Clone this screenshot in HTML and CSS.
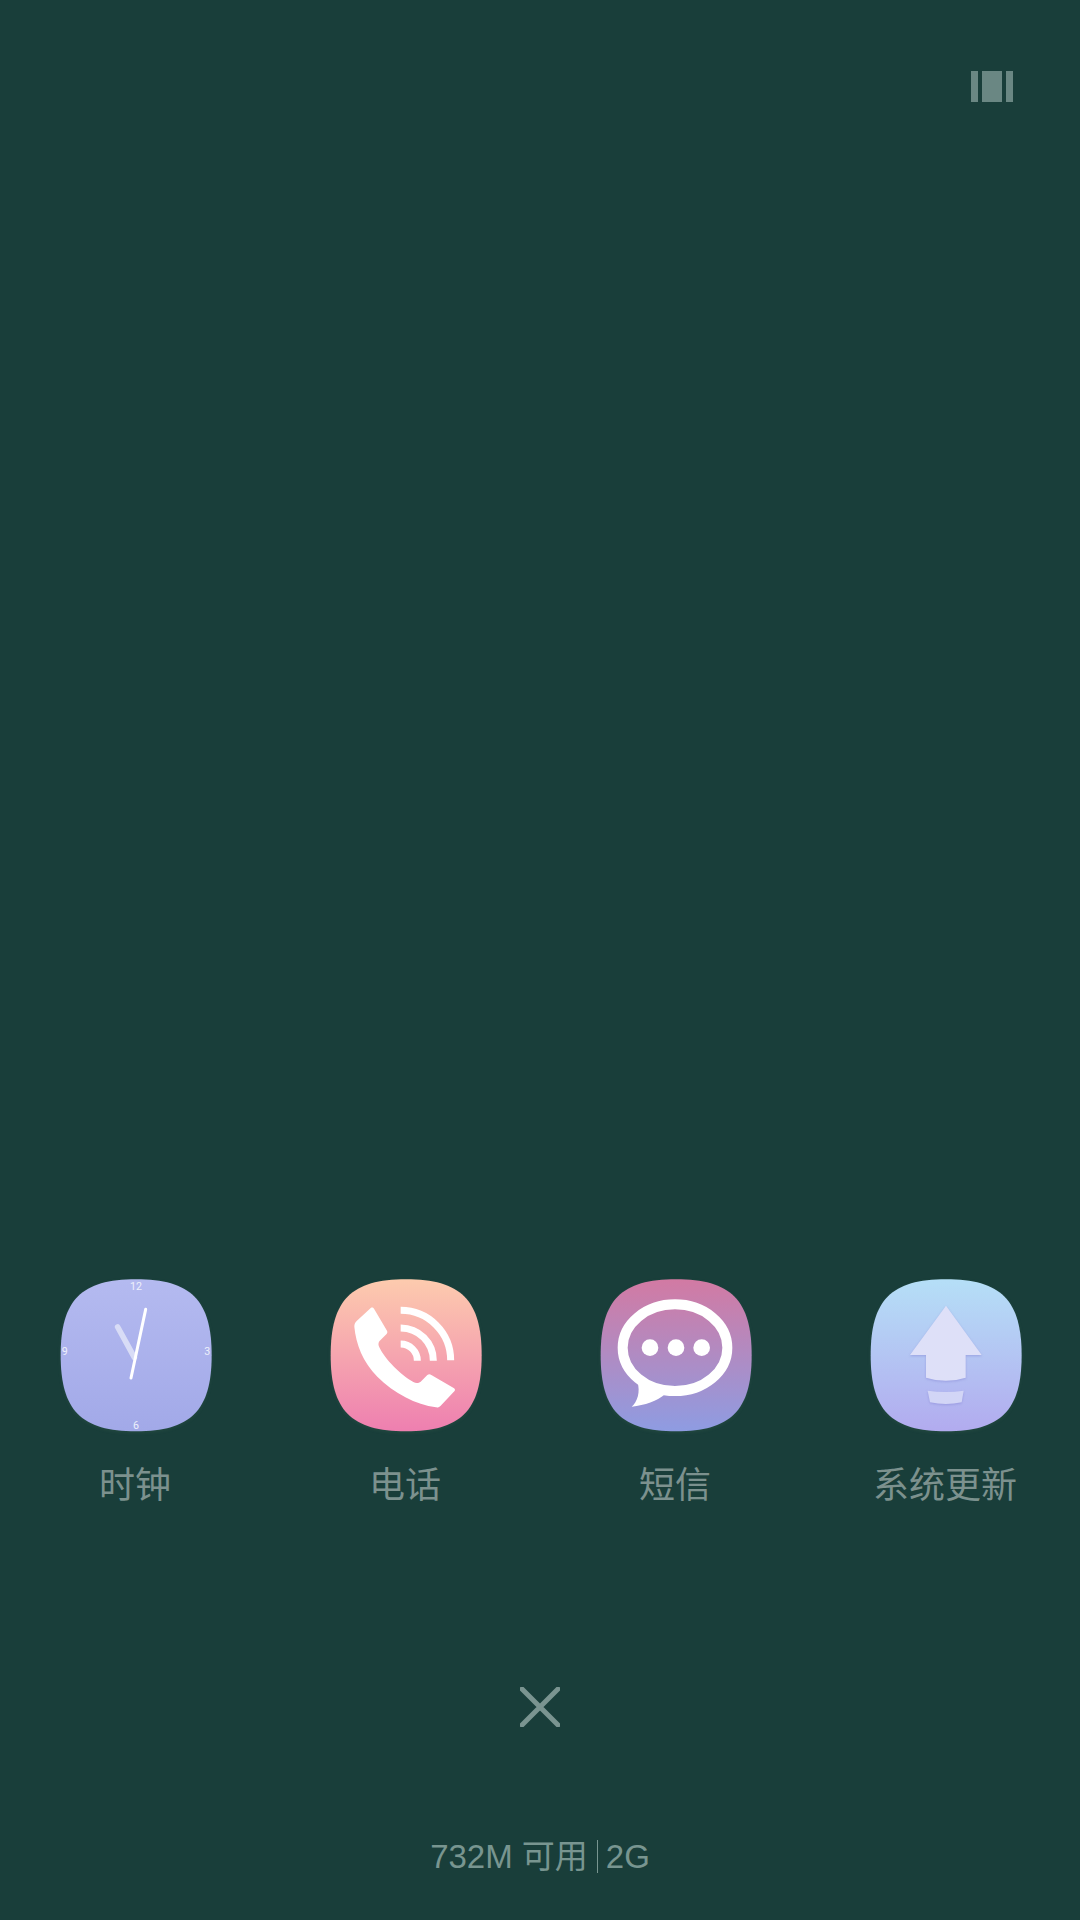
FILE: index.html
```html
<!DOCTYPE html>
<html lang="zh-CN">
<head>
<meta charset="utf-8">
<title>最近任务</title>
<link rel="stylesheet" href="styles.css">
</head>
<body>
<main class="screen">
  <header class="top">
    <div class="grid-toggle"><span class="bar"></span><span class="bar bar-wide"></span><span class="bar"></span></div>
  </header>

  <section class="apps">
    <article class="app">
      <svg class="icon" viewBox="45 48 480 480">
        <defs><linearGradient id="gc" x1="0" y1="0" x2="0" y2="1"><stop offset="0" stop-color="#b4baf0"/><stop offset="1" stop-color="#a2a9e8"/></linearGradient></defs>
        <path class="squircle" fill="url(#gc)" d="M288 58C452 58 515 120 515 286C515 452 452 514 288 514C124 514 62 452 62 286C62 120 124 58 288 58Z"/>
        <text class="num" x="288" y="90">12</text>
        <text class="num" x="502" y="285">3</text>
        <text class="num" x="288" y="507">6</text>
        <text class="num" x="74" y="285">9</text>
        <line class="hand-hour" x1="233" y1="201" x2="283" y2="292"/>
        <line class="hand-min" x1="273" y1="354" x2="317" y2="148"/>
      </svg>
      <div class="label">时钟</div>
    </article>

    <article class="app">
      <svg class="icon" viewBox="45 48 480 480">
        <defs><linearGradient id="gp" x1="0" y1="0" x2="0" y2="1"><stop offset="0" stop-color="#fdcbae"/><stop offset="1" stop-color="#ee7fb0"/></linearGradient></defs>
        <path class="squircle" fill="url(#gp)" d="M288 58C452 58 515 120 515 286C515 452 452 514 288 514C124 514 62 452 62 286C62 120 124 58 288 58Z"/>
        <path class="white" d="M183 143C187 141 190 143 192 146L231 212C233 216 232 220 229 223L208 244C204 250 205 256 208 262C225 298 272 345 310 366C318 371 326 370 332 365L352 345C356 342 360 342 364 345L431 384C436 387 436 391 433 394L392 437C388 441 384 443 378 442C318 434 252 400 202 350C158 305 138 252 133 200C133 193 135 188 140 183Z"/>
        <path class="wave" d="M272 151A150 150 0 0 1 422 301"/>
        <path class="wave" d="M272 204A98 98 0 0 1 370 302"/>
        <path class="wave" d="M272 252A50 50 0 0 1 322 302"/>
      </svg>
      <div class="label">电话</div>
    </article>

    <article class="app">
      <svg class="icon" viewBox="45 48 480 480">
        <defs><linearGradient id="gm" x1="0" y1="0" x2="0" y2="1"><stop offset="0" stop-color="#d27aa3"/><stop offset="1" stop-color="#8e9ce2"/></linearGradient></defs>
        <path class="squircle" fill="url(#gm)" d="M288 58C452 58 515 120 515 286C515 452 452 514 288 514C124 514 62 452 62 286C62 120 124 58 288 58Z"/>
        <path class="white" d="M172 365C182 395 172 425 155 440C195 436 230 425 258 400Z"/>
        <ellipse class="bubble" cx="285" cy="263" rx="157" ry="130"/>
        <circle class="white" cx="210" cy="263" r="25"/>
        <circle class="white" cx="288" cy="263" r="25"/>
        <circle class="white" cx="365" cy="263" r="25"/>
      </svg>
      <div class="label">短信</div>
    </article>

    <article class="app">
      <svg class="icon" viewBox="45 48 480 480">
        <defs><linearGradient id="gu" x1="0" y1="0" x2="0" y2="1"><stop offset="0" stop-color="#b5dff7"/><stop offset="1" stop-color="#b2abef"/></linearGradient></defs>
        <path class="squircle" fill="url(#gu)" d="M288 58C452 58 515 120 515 286C515 452 452 514 288 514C124 514 62 452 62 286C62 120 124 58 288 58Z"/>
        <path class="arrow" d="M288 137L395 285L347 285L347 353Q288 372 228 353L228 285L180 285Z"/>
        <path class="arrow arrow-base" d="M233 392Q288 400 341 392L335 427Q288 437 240 427Z"/>
      </svg>
      <div class="label">系统更新</div>
    </article>
  </section>

  <button class="close" type="button" aria-label="关闭">
    <svg class="close-icon" viewBox="0 0 40 40"><path d="M2 2L38 38M38 2L2 38"/></svg>
  </button>

  <footer class="memory">
    <span>732M 可用</span><span class="divider"></span><span>2G</span>
  </footer>
</main>
</body>
</html>
```

FILE: styles.css
```css
html, body {
  margin: 0;
  padding: 0;
  background: #193e3a;
}

.screen {
  width: 1080px;
  height: 1920px;
  display: flex;
  flex-direction: column;
  overflow: hidden;
  background: #193e3a;
  font-family: "Roboto", "Noto Sans CJK SC", sans-serif;
}

.top {
  display: flex;
  justify-content: flex-end;
  padding: 71px 67px 0 0;
}

.grid-toggle {
  display: flex;
  gap: 4px;
  height: 31px;
}

.bar {
  width: 7px;
  background: #6a8783;
}

.bar-wide {
  width: 20px;
}

.apps {
  display: grid;
  grid-template-columns: repeat(4, 270px);
  margin-top: 1174px;
}

.app {
  display: flex;
  flex-direction: column;
  align-items: center;
}

.icon {
  display: block;
  width: 160px;
  height: 160px;
}

.squircle {
  filter: drop-shadow(0 4px 4px rgba(60, 100, 80, 0.3));
}

.label {
  margin-top: 26px;
  font-size: 36px;
  line-height: 48px;
  color: #7c918e;
}

.num {
  font-size: 32px;
  fill: #eef0fb;
  text-anchor: middle;
}

.hand-hour {
  stroke: #d8dcf6;
  stroke-width: 17;
  stroke-linecap: round;
}

.hand-min {
  stroke: #ffffff;
  stroke-width: 9;
  stroke-linecap: round;
}

.white {
  fill: #ffffff;
}

.wave {
  fill: none;
  stroke: #ffffff;
  stroke-width: 21;
}

.bubble {
  fill: none;
  stroke: #ffffff;
  stroke-width: 30;
}

.arrow {
  fill: #dee0f8;
  filter: drop-shadow(0 3px 3px rgba(130, 130, 210, 0.5));
}

.arrow-base {
  fill: #d2d5f6;
}

.close {
  align-self: center;
  display: block;
  width: 40px;
  height: 40px;
  margin-top: 177px;
  padding: 0;
  border: 0;
  background: none;
}

.close-icon {
  display: block;
  width: 40px;
  height: 40px;
}

.close-icon path {
  fill: none;
  stroke: #7a9490;
  stroke-width: 5;
  stroke-linecap: round;
}

.memory {
  display: flex;
  justify-content: center;
  align-items: center;
  height: 40px;
  margin-top: 110px;
  font-family: "Liberation Sans", "Noto Sans CJK SC", sans-serif;
  font-size: 33px;
  line-height: 40px;
  color: #789590;
}

.divider {
  width: 1px;
  height: 33px;
  margin: 0 8px 2px 9px;
  background: #789590;
}
```
